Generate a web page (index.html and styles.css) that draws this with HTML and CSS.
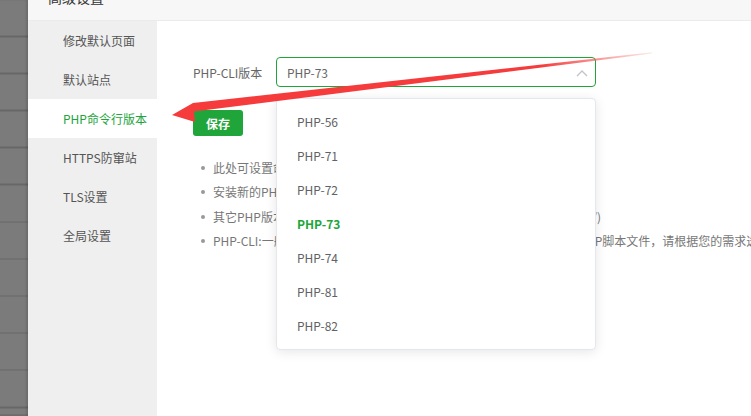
FILE: index.html
```html
<!DOCTYPE html>
<html lang="zh-CN">
<head>
<meta charset="utf-8">
<title>高级设置</title>
<link rel="stylesheet" href="styles.css">
</head>
<body>
<div class="page">
  <div class="backdrop"></div>
  <div class="dialog">
    <div class="dialog-head"><span class="dialog-title">高级设置</span></div>
    <div class="dialog-body">
      <ul class="side-menu">
        <li class="side-item">修改默认页面</li>
        <li class="side-item">默认站点</li>
        <li class="side-item active">PHP命令行版本</li>
        <li class="side-item">HTTPS防窜站</li>
        <li class="side-item">TLS设置</li>
        <li class="side-item">全局设置</li>
      </ul>
      <div class="content">
        <div class="form-row">
          <label class="form-label">PHP-CLI版本</label>
          <div class="select-wrap">
            <div class="select">
              <span class="select-value">PHP-73</span>
              <svg class="chevron" width="12" height="8" viewBox="0 0 12 8"><path d="M1 7 L6 2 L11 7" fill="none" stroke="#c0c4cc" stroke-width="1.4"/></svg>
            </div>
            <ul class="dropdown">
              <li class="opt">PHP-56</li>
              <li class="opt">PHP-71</li>
              <li class="opt">PHP-72</li>
              <li class="opt selected">PHP-73</li>
              <li class="opt">PHP-74</li>
              <li class="opt">PHP-81</li>
              <li class="opt">PHP-82</li>
            </ul>
          </div>
        </div>
        <button class="btn-save">保存</button>
        <ul class="tips">
          <li>此处可设置命令行运行php时使用的PHP版本</li>
          <li>安装新的PHP版本后，这里需要重新设置</li>
          <li>其它PHP版本在命令行中可通过完整路径调用，如：(/www/server/php/)</li>
          <li>PHP-CLI:一般用于在命令行/计划任务、守护进程等场景中直接运行的PHP脚本文件，请根据您的需求选择合适的版本</li>
        </ul>
      </div>
    </div>
  </div>
  <svg class="annot" width="751" height="416" viewBox="0 0 751 416">
    <defs>
      <linearGradient id="fade" gradientUnits="userSpaceOnUse" x1="652" y1="0" x2="540" y2="0">
        <stop offset="0" stop-color="#f53b3b" stop-opacity="0.1"/>
        <stop offset="1" stop-color="#f53b3b" stop-opacity="1"/>
      </linearGradient>
    </defs>
    <polygon points="652,52.3 193,103 172,115 195,122 194,111.5 652,53.6" fill="url(#fade)"/>
  </svg>
</div>
</body>
</html>
```

FILE: styles.css
```css
* { box-sizing: border-box; }
html, body { margin: 0; padding: 0; }
body {
  width: 751px;
  height: 416px;
  overflow: hidden;
  background: #fff;
  font-family: "Noto Sans CJK SC", "Noto Sans", sans-serif;
  font-size: 12px;
  color: #666;
}
.page {
  position: relative;
  display: flex;
  width: 751px;
  height: 416px;
  overflow: hidden;
}
.backdrop {
  flex: 0 0 28px;
  background-color: #7b7b7b;
  background-image: repeating-linear-gradient(to bottom, #676767 0, #676767 1.5px, transparent 1.5px, transparent 37.1px);
  background-position: 0 -1.5px;
  box-shadow: inset -2px 0 2px rgba(0,0,0,0.12);
}
.dialog {
  flex: 1;
  display: flex;
  flex-direction: column;
  background: #fff;
  min-width: 0;
}
.dialog-head {
  flex: 0 0 21px;
  background: #f7f7f7;
  border-bottom: 1px solid #ebebeb;
  padding-left: 20px;
  overflow: hidden;
}
.dialog-title {
  display: block;
  font-size: 14px;
  line-height: 14px;
  margin-top: -10px;
  color: #333;
}
.dialog-body {
  flex: 1;
  display: flex;
  min-height: 0;
}
.side-menu {
  flex: 0 0 129px;
  list-style: none;
  margin: 0;
  padding: 0;
  background: #efefef;
}
.side-item {
  height: 39px;
  line-height: 39px;
  padding-left: 35px;
  color: #555;
  font-size: 12px;
  white-space: nowrap;
}
.side-item.active {
  background: #fff;
  color: #20a53a;
}
.content {
  flex: 1;
  padding: 36px 0 0 36px;
  white-space: nowrap;
  min-width: 0;
}
.form-row {
  display: flex;
  align-items: center;
}
.form-label {
  width: 83px;
  color: #666;
}
.select-wrap {
  position: relative;
  width: 320px;
}
.select {
  height: 30px;
  border: 1px solid #20a53a;
  border-radius: 4px;
  display: flex;
  align-items: center;
  justify-content: space-between;
  padding: 0 7px 0 10px;
  color: #666;
}
.chevron { margin-top: 1px; }
.dropdown {
  position: absolute;
  left: 0;
  top: 41px;
  width: 320px;
  margin: 0;
  padding: 6px 0;
  list-style: none;
  background: #fff;
  border: 1px solid #e4e7ed;
  border-radius: 4px;
  box-shadow: 0 2px 12px rgba(0,0,0,0.1);
  z-index: 5;
}
.opt {
  height: 34px;
  line-height: 34px;
  padding-left: 20px;
  color: #606266;
}
.opt.selected {
  color: #20a53a;
  font-weight: bold;
}
.btn-save {
  display: block;
  margin-top: 23px;
  width: 50px;
  height: 26px;
  border: none;
  border-radius: 3px;
  background: #20a53a;
  color: #fff;
  font-family: inherit;
  font-size: 12px;
  font-weight: bold;
  padding: 0;
}
.tips {
  list-style: none;
  margin: 20px 0 0 0;
  padding: 0;
}
.tips li {
  position: relative;
  height: 24.4px;
  line-height: 24px;
  padding-left: 20px;
  color: #777;
}
.tips li::before {
  content: "";
  position: absolute;
  left: 8px;
  top: 10px;
  width: 4px;
  height: 4px;
  border-radius: 50%;
  background: #999;
}
.annot {
  position: absolute;
  left: 0;
  top: 0;
  pointer-events: none;
  z-index: 10;
}
```
